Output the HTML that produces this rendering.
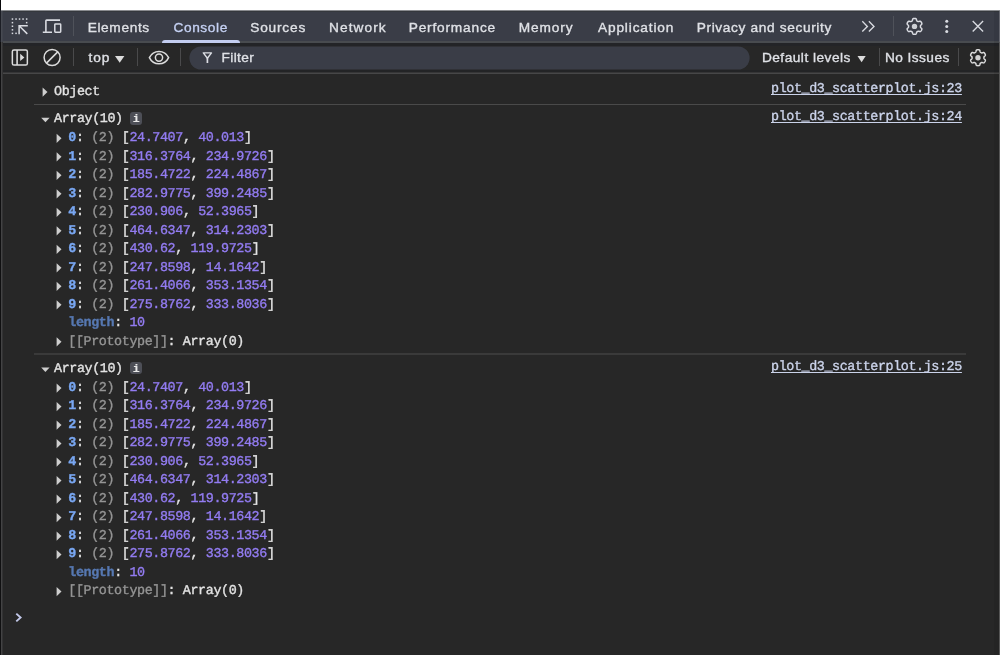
<!DOCTYPE html>
<html>
<head>
<meta charset="utf-8">
<title>DevTools Console</title>
<style>
html,body{margin:0;padding:0;}
body{width:1000px;height:655px;overflow:hidden;background:#272727;position:relative;font-family:"Liberation Sans",sans-serif;}
#root{position:absolute;left:0;top:0;width:1000px;height:655px;will-change:transform;}
.abs{position:absolute;}
#white{left:0;top:0;width:1000px;height:10px;background:#fff;}
#lb0{left:0;top:0;width:1px;height:10px;background:#08080a;}
#lb0b{left:0;top:10px;width:1px;height:32px;background:#1c1e25;}
#lb0c{left:0;top:42px;width:1px;height:613px;background:#101011;}
#lb1{left:1px;top:42px;width:1px;height:613px;background:#434344;}
#lb1t{left:1px;top:11px;width:1px;height:31px;background:#474a52;}
#lb2{left:2px;top:42px;width:1px;height:613px;background:#333334;}
#lb2t{left:2px;top:11px;width:1px;height:31px;background:#40434c;}
#rb{left:999px;top:42px;width:1px;height:613px;background:#565656;}
#rbt{left:999px;top:11px;width:1px;height:31px;background:#63656d;}
#rshade{left:994px;top:11px;width:5px;height:644px;background:rgba(0,0,0,0.07);}
#top10{left:0;top:10px;width:1000px;height:1px;background:#8a8c90;}
#top11{left:0;top:11px;width:1000px;height:1px;background:#35383d;}
#tabbar{left:0;top:10px;width:1000px;height:31px;background:#3a3d47;}
#tabline{left:0;top:41px;width:1000px;height:2px;background:#484b4f;}
#tabdark{left:0;top:43px;width:1000px;height:3px;background:#232427;}
#tooldark{left:0;top:70px;width:1000px;height:2px;background:#232426;}
#toolline0{left:0;top:72px;width:1000px;height:1px;background:#363637;}
#toolline{left:0;top:73px;width:1000px;height:1px;background:#474748;}
.t{position:absolute;white-space:nowrap;font-size:13.7px;line-height:16px;color:#dfe1e6;-webkit-text-stroke:0.35px currentColor;}
.vd{position:absolute;width:1px;background:#4f525a;}
.vd2{position:absolute;width:1px;background:#4a4a4b;}

.m{position:absolute;white-space:pre;font-family:"Liberation Mono",monospace;font-size:13.4px;letter-spacing:-0.4px;line-height:16px;color:#e3e3e3;text-rendering:geometricPrecision;-webkit-text-stroke:0.35px currentColor;}
.k{color:#79a7f2;font-weight:bold;}
.kd{color:#5678b2;font-weight:bold;}
.g{color:#959595;}
.n{color:#937cf2;}
.lnk{color:#cbd3ea;text-decoration:underline;text-decoration-thickness:1.2px;text-underline-offset:1.5px;text-decoration-skip-ink:none;}
.sep{position:absolute;left:34px;width:932px;height:1px;background:#4a4a4a;}
.ibadge{width:12.7px;height:12.7px;border-radius:3px;background:#4d4f57;}
.ibadge span{position:absolute;left:0;width:12.7px;top:-1.2px;text-align:center;font-family:"Liberation Mono",monospace;font-weight:bold;font-size:11.5px;line-height:16px;color:#e8e8e8;-webkit-text-stroke:0.15px currentColor;}
svg{position:absolute;overflow:visible;}
</style>
</head>
<body>
<div id="root">
<div class="abs" id="white"></div>
<div class="abs" id="tabbar"></div>
<div class="abs" id="tabline"></div>
<div class="abs" id="tabdark"></div>
<div class="abs" id="tooldark"></div>
<div class="abs" id="toolline0"></div>
<div class="abs" id="toolline"></div>
<div class="abs" id="top10"></div>
<div class="abs" id="top11"></div>
<div class="abs" id="rshade"></div>
<div class="abs" id="lb0"></div><div class="abs" id="lb0b"></div><div class="abs" id="lb0c"></div>
<div class="abs" id="lb1"></div><div class="abs" id="lb1t"></div>
<div class="abs" id="lb2"></div><div class="abs" id="lb2t"></div>
<div class="abs" id="rb"></div><div class="abs" id="rbt"></div>
<div class="abs" style="left:161.5px;top:40px;width:78px;height:3px;border-radius:3px 3px 0 0;background:#c3cdf0;"></div>
<div class="vd" style="left:73px;top:16px;height:20px"></div>
<div class="vd" style="left:893px;top:16px;height:20px"></div>
<div class="vd2" style="left:73px;top:48px;height:18px"></div>
<div class="vd2" style="left:137px;top:48px;height:18px"></div>
<div class="vd2" style="left:180px;top:48px;height:18px"></div>
<div class="vd2" style="left:879px;top:48px;height:18px"></div>
<div class="vd2" style="left:958px;top:48px;height:18px"></div>
<svg style="left:0;top:0" width="1" height="1"><rect x="189.4" y="46.4" width="560.2" height="23.2" rx="11.6" fill="#3a3d47"/></svg>
<div class="t" style="left:87.7px;top:19.65px;letter-spacing:0.63px;">Elements</div>
<div class="t" style="left:173.4px;top:19.65px;letter-spacing:0.62px;color:#c5d1f3;">Console</div>
<div class="t" style="left:250.2px;top:19.65px;letter-spacing:0.81px;">Sources</div>
<div class="t" style="left:329.0px;top:19.65px;letter-spacing:1.07px;">Network</div>
<div class="t" style="left:408.7px;top:19.65px;letter-spacing:0.81px;">Performance</div>
<div class="t" style="left:518.7px;top:19.65px;letter-spacing:0.9px;">Memory</div>
<div class="t" style="left:598.0px;top:19.65px;letter-spacing:0.84px;">Application</div>
<div class="t" style="left:696.7px;top:19.65px;letter-spacing:0.64px;">Privacy and security</div>
<div class="t" style="left:88.5px;top:49.75px;letter-spacing:0.9px;">top</div>
<div class="t" style="left:221.5px;top:49.75px;letter-spacing:0.38px;">Filter</div>
<div class="t" style="left:761.9px;top:49.75px;letter-spacing:0.49px;">Default levels</div>
<div class="t" style="left:885.0px;top:49.75px;letter-spacing:0.43px;">No Issues</div>

<!-- icons -->
<svg style="left:0;top:0" width="1000" height="80" viewBox="0 0 1000 80" fill="none">
<!-- inspect -->
<g fill="#d9dbe1">
<rect x="11.7" y="18.3" width="1.5" height="1.5"/><rect x="15.3" y="18.3" width="1.5" height="1.5"/><rect x="18.8" y="18.3" width="1.5" height="1.5"/><rect x="22.3" y="18.3" width="1.5" height="1.5"/><rect x="25.9" y="18.3" width="1.5" height="1.5"/>
<rect x="11.7" y="21.9" width="1.5" height="1.5"/><rect x="11.7" y="25.5" width="1.5" height="1.5"/><rect x="11.7" y="29.1" width="1.5" height="1.5"/><rect x="11.7" y="32.6" width="1.5" height="1.5"/>
<rect x="25.9" y="21.9" width="1.5" height="1.5"/>
<rect x="15.3" y="32.6" width="1.5" height="1.5"/>
</g>
<path d="M19.1 34.2V25.7H27.8M19.6 26.2L27.3 33.9" stroke="#d9dbe1" stroke-width="1.5"/>
<!-- device -->
<path d="M60 20.1H46.6Q45.9 20.1 45.9 20.8V31.6M42.8 32.2H52" stroke="#d9dbe1" stroke-width="1.6"/>
<rect x="54.8" y="24" width="5.9" height="8.2" rx="0.6" stroke="#d9dbe1" stroke-width="1.5"/>
<!-- >> -->
<path d="M862.3 21.3L867.4 26.4L862.3 31.5M868.9 21.3L874 26.4L868.9 31.5" stroke="#d9dbe1" stroke-width="1.35"/>
<!-- gear 1 -->
<g transform="translate(914.5,26.4)"><path d="M5.94 -0.00L5.94 -0.21L5.94 -0.42L5.96 -0.63L6.02 -0.85L6.16 -1.09L6.43 -1.37L6.82 -1.70L7.16 -2.05L7.34 -2.39L7.38 -2.69L7.33 -2.96L7.25 -3.23L7.14 -3.48L7.02 -3.73L6.88 -3.98L6.74 -4.21L6.59 -4.44L6.42 -4.66L6.23 -4.87L6.01 -5.05L5.74 -5.17L5.36 -5.18L4.88 -5.06L4.40 -4.89L4.02 -4.79L3.74 -4.79L3.52 -4.85L3.33 -4.94L3.15 -5.04L2.97 -5.14L2.79 -5.24L2.61 -5.35L2.44 -5.48L2.28 -5.64L2.14 -5.88L2.03 -6.25L1.94 -6.76L1.80 -7.23L1.61 -7.55L1.36 -7.73L1.10 -7.83L0.83 -7.89L0.55 -7.92L0.28 -7.94L0.00 -7.95L-0.28 -7.94L-0.55 -7.92L-0.83 -7.89L-1.10 -7.83L-1.36 -7.73L-1.61 -7.55L-1.80 -7.23L-1.94 -6.76L-2.03 -6.25L-2.14 -5.88L-2.28 -5.64L-2.44 -5.48L-2.61 -5.35L-2.79 -5.24L-2.97 -5.14L-3.15 -5.04L-3.33 -4.94L-3.52 -4.85L-3.74 -4.79L-4.02 -4.79L-4.40 -4.89L-4.88 -5.06L-5.36 -5.18L-5.74 -5.17L-6.01 -5.05L-6.23 -4.87L-6.42 -4.66L-6.59 -4.44L-6.74 -4.21L-6.88 -3.98L-7.02 -3.73L-7.14 -3.48L-7.25 -3.23L-7.33 -2.96L-7.38 -2.69L-7.34 -2.39L-7.16 -2.05L-6.82 -1.70L-6.43 -1.37L-6.16 -1.09L-6.02 -0.85L-5.96 -0.63L-5.94 -0.42L-5.94 -0.21L-5.94 -0.00L-5.94 0.21L-5.94 0.42L-5.96 0.63L-6.02 0.85L-6.16 1.09L-6.43 1.37L-6.82 1.70L-7.16 2.05L-7.34 2.39L-7.38 2.69L-7.33 2.96L-7.25 3.23L-7.14 3.48L-7.02 3.73L-6.88 3.98L-6.74 4.21L-6.59 4.44L-6.42 4.66L-6.23 4.87L-6.01 5.05L-5.74 5.17L-5.36 5.18L-4.88 5.06L-4.40 4.89L-4.02 4.79L-3.74 4.79L-3.52 4.85L-3.33 4.94L-3.15 5.04L-2.97 5.14L-2.79 5.24L-2.61 5.35L-2.44 5.48L-2.28 5.64L-2.14 5.88L-2.03 6.25L-1.94 6.76L-1.80 7.23L-1.61 7.55L-1.36 7.73L-1.10 7.83L-0.83 7.89L-0.55 7.92L-0.28 7.94L-0.00 7.95L0.28 7.94L0.55 7.92L0.83 7.89L1.10 7.83L1.36 7.73L1.61 7.55L1.80 7.23L1.94 6.76L2.03 6.25L2.14 5.88L2.28 5.64L2.44 5.48L2.61 5.35L2.79 5.24L2.97 5.14L3.15 5.04L3.33 4.94L3.52 4.85L3.74 4.79L4.02 4.79L4.40 4.89L4.88 5.06L5.36 5.18L5.74 5.17L6.01 5.05L6.23 4.87L6.42 4.66L6.59 4.44L6.74 4.21L6.88 3.98L7.02 3.73L7.14 3.48L7.25 3.23L7.33 2.96L7.38 2.69L7.34 2.39L7.16 2.05L6.82 1.70L6.43 1.37L6.16 1.09L6.02 0.85L5.96 0.63L5.94 0.42L5.94 0.21Z" stroke="#d9dbe1" stroke-width="1.5" stroke-linejoin="round" fill="none"/><circle r="2.7" fill="#cdcfd4"/></g>
<!-- dots -->
<g fill="#d9dbe1"><circle cx="946.75" cy="21.3" r="1.5"/><circle cx="946.75" cy="26.5" r="1.5"/><circle cx="946.75" cy="31.6" r="1.5"/></g>
<!-- close -->
<path d="M972.7 21.1L983.1 31.5M983.1 21.1L972.7 31.5" stroke="#d9dbe1" stroke-width="1.35"/>
<!-- sidebar -->
<rect x="12.35" y="50" width="15" height="15" rx="1.6" stroke="#dcdcdc" stroke-width="1.5"/>
<path d="M17.1 50V65" stroke="#dcdcdc" stroke-width="1.6"/>
<path d="M20.2 53.8L24.4 57.4L20.2 61Z" fill="#dcdcdc"/>
<!-- clear -->
<circle cx="52.1" cy="57.5" r="8" stroke="#dcdcdc" stroke-width="1.5"/>
<path d="M46.5 63.1L57.7 51.9" stroke="#dcdcdc" stroke-width="1.5"/>
<!-- top dropdown -->
<path d="M115 55.9H124.4L119.7 62.7Z" fill="#dcdcdc"/>
<!-- eye -->
<path d="M149.4 57.6C151.3 53.6 154.9 51.4 159 51.4C163.1 51.4 166.7 53.6 168.6 57.6C166.7 61.6 163.1 63.8 159 63.8C154.9 63.8 151.3 61.6 149.4 57.6Z" stroke="#dcdcdc" stroke-width="1.5"/>
<circle cx="159" cy="57.6" r="3.6" stroke="#dcdcdc" stroke-width="1.5"/>
<!-- funnel -->
<path d="M203.3 52.9H211.5L207.4 58.2Z" stroke="#dcdee4" stroke-width="1.4" stroke-linejoin="round"/>
<path d="M207.4 57.8V63" stroke="#dcdee4" stroke-width="1.7"/>
<!-- levels dropdown -->
<path d="M857.5 55.9H865.7L861.6 62.2Z" fill="#dcdcdc"/>
<!-- gear 2 -->
<g transform="translate(978,57.7)"><path d="M5.94 -0.00L5.94 -0.21L5.94 -0.42L5.96 -0.63L6.02 -0.85L6.16 -1.09L6.43 -1.37L6.82 -1.70L7.16 -2.05L7.34 -2.39L7.38 -2.69L7.33 -2.96L7.25 -3.23L7.14 -3.48L7.02 -3.73L6.88 -3.98L6.74 -4.21L6.59 -4.44L6.42 -4.66L6.23 -4.87L6.01 -5.05L5.74 -5.17L5.36 -5.18L4.88 -5.06L4.40 -4.89L4.02 -4.79L3.74 -4.79L3.52 -4.85L3.33 -4.94L3.15 -5.04L2.97 -5.14L2.79 -5.24L2.61 -5.35L2.44 -5.48L2.28 -5.64L2.14 -5.88L2.03 -6.25L1.94 -6.76L1.80 -7.23L1.61 -7.55L1.36 -7.73L1.10 -7.83L0.83 -7.89L0.55 -7.92L0.28 -7.94L0.00 -7.95L-0.28 -7.94L-0.55 -7.92L-0.83 -7.89L-1.10 -7.83L-1.36 -7.73L-1.61 -7.55L-1.80 -7.23L-1.94 -6.76L-2.03 -6.25L-2.14 -5.88L-2.28 -5.64L-2.44 -5.48L-2.61 -5.35L-2.79 -5.24L-2.97 -5.14L-3.15 -5.04L-3.33 -4.94L-3.52 -4.85L-3.74 -4.79L-4.02 -4.79L-4.40 -4.89L-4.88 -5.06L-5.36 -5.18L-5.74 -5.17L-6.01 -5.05L-6.23 -4.87L-6.42 -4.66L-6.59 -4.44L-6.74 -4.21L-6.88 -3.98L-7.02 -3.73L-7.14 -3.48L-7.25 -3.23L-7.33 -2.96L-7.38 -2.69L-7.34 -2.39L-7.16 -2.05L-6.82 -1.70L-6.43 -1.37L-6.16 -1.09L-6.02 -0.85L-5.96 -0.63L-5.94 -0.42L-5.94 -0.21L-5.94 -0.00L-5.94 0.21L-5.94 0.42L-5.96 0.63L-6.02 0.85L-6.16 1.09L-6.43 1.37L-6.82 1.70L-7.16 2.05L-7.34 2.39L-7.38 2.69L-7.33 2.96L-7.25 3.23L-7.14 3.48L-7.02 3.73L-6.88 3.98L-6.74 4.21L-6.59 4.44L-6.42 4.66L-6.23 4.87L-6.01 5.05L-5.74 5.17L-5.36 5.18L-4.88 5.06L-4.40 4.89L-4.02 4.79L-3.74 4.79L-3.52 4.85L-3.33 4.94L-3.15 5.04L-2.97 5.14L-2.79 5.24L-2.61 5.35L-2.44 5.48L-2.28 5.64L-2.14 5.88L-2.03 6.25L-1.94 6.76L-1.80 7.23L-1.61 7.55L-1.36 7.73L-1.10 7.83L-0.83 7.89L-0.55 7.92L-0.28 7.94L-0.00 7.95L0.28 7.94L0.55 7.92L0.83 7.89L1.10 7.83L1.36 7.73L1.61 7.55L1.80 7.23L1.94 6.76L2.03 6.25L2.14 5.88L2.28 5.64L2.44 5.48L2.61 5.35L2.79 5.24L2.97 5.14L3.15 5.04L3.33 4.94L3.52 4.85L3.74 4.79L4.02 4.79L4.40 4.89L4.88 5.06L5.36 5.18L5.74 5.17L6.01 5.05L6.23 4.87L6.42 4.66L6.59 4.44L6.74 4.21L6.88 3.98L7.02 3.73L7.14 3.48L7.25 3.23L7.33 2.96L7.38 2.69L7.34 2.39L7.16 2.05L6.82 1.70L6.43 1.37L6.16 1.09L6.02 0.85L5.96 0.63L5.94 0.42L5.94 0.21Z" stroke="#dcdcdc" stroke-width="1.5" stroke-linejoin="round" fill="none"/><circle r="2.7" fill="#d0d0d0"/></g>
</svg>
<!-- prompt -->
<svg style="left:0;top:0" width="1" height="1"><path d="M16.3 613.6L20.6 617.5L16.3 621.4" stroke="#c3c9ea" stroke-width="1.9" fill="none"/></svg>

<svg style="left:0;top:0" width="1" height="1"><polygon points="42.60,87.50 47.50,92.10 42.60,96.70" fill="#cecece"/></svg>

<div class="m " style="left:54px;top:85px;">Object</div>

<div class="m lnk" style="left:771px;top:82px;">plot_d3_scatterplot.js:23</div>

<div class="sep" style="top:104px"></div>
<svg style="left:0;top:0" width="1" height="1"><polygon points="41.20,117.70 49.60,117.70 45.40,122.30" fill="#cecece"/></svg>
<div class="m " style="left:54px;top:112px;">Array(10)</div>
<div class="abs ibadge" style="left:129.8px;top:112.00px;"><span>i</span></div>
<div class="m lnk" style="left:771px;top:110px;">plot_d3_scatterplot.js:24</div>
<svg style="left:0;top:0" width="1" height="1"><polygon points="56.60,133.70 61.50,138.30 56.60,142.90" fill="#cecece"/></svg>
<div class="m " style="left:68.3px;top:131px;"><span class="k">0</span>: <span class="g">(2)</span> [<span class="n">24.7407</span>, <span class="n">40.013</span>]</div>
<svg style="left:0;top:0" width="1" height="1"><polygon points="56.60,152.20 61.50,156.80 56.60,161.40" fill="#cecece"/></svg>
<div class="m " style="left:68.3px;top:150px;"><span class="k">1</span>: <span class="g">(2)</span> [<span class="n">316.3764</span>, <span class="n">234.9726</span>]</div>
<svg style="left:0;top:0" width="1" height="1"><polygon points="56.60,170.70 61.50,175.30 56.60,179.90" fill="#cecece"/></svg>
<div class="m " style="left:68.3px;top:168px;"><span class="k">2</span>: <span class="g">(2)</span> [<span class="n">185.4722</span>, <span class="n">224.4867</span>]</div>
<svg style="left:0;top:0" width="1" height="1"><polygon points="56.60,189.20 61.50,193.80 56.60,198.40" fill="#cecece"/></svg>
<div class="m " style="left:68.3px;top:187px;"><span class="k">3</span>: <span class="g">(2)</span> [<span class="n">282.9775</span>, <span class="n">399.2485</span>]</div>
<svg style="left:0;top:0" width="1" height="1"><polygon points="56.60,207.70 61.50,212.30 56.60,216.90" fill="#cecece"/></svg>
<div class="m " style="left:68.3px;top:205px;"><span class="k">4</span>: <span class="g">(2)</span> [<span class="n">230.906</span>, <span class="n">52.3965</span>]</div>
<svg style="left:0;top:0" width="1" height="1"><polygon points="56.60,226.20 61.50,230.80 56.60,235.40" fill="#cecece"/></svg>
<div class="m " style="left:68.3px;top:224px;"><span class="k">5</span>: <span class="g">(2)</span> [<span class="n">464.6347</span>, <span class="n">314.2303</span>]</div>
<svg style="left:0;top:0" width="1" height="1"><polygon points="56.60,244.70 61.50,249.30 56.60,253.90" fill="#cecece"/></svg>
<div class="m " style="left:68.3px;top:242px;"><span class="k">6</span>: <span class="g">(2)</span> [<span class="n">430.62</span>, <span class="n">119.9725</span>]</div>
<svg style="left:0;top:0" width="1" height="1"><polygon points="56.60,263.20 61.50,267.80 56.60,272.40" fill="#cecece"/></svg>
<div class="m " style="left:68.3px;top:261px;"><span class="k">7</span>: <span class="g">(2)</span> [<span class="n">247.8598</span>, <span class="n">14.1642</span>]</div>
<svg style="left:0;top:0" width="1" height="1"><polygon points="56.60,281.70 61.50,286.30 56.60,290.90" fill="#cecece"/></svg>
<div class="m " style="left:68.3px;top:279px;"><span class="k">8</span>: <span class="g">(2)</span> [<span class="n">261.4066</span>, <span class="n">353.1354</span>]</div>
<svg style="left:0;top:0" width="1" height="1"><polygon points="56.60,300.20 61.50,304.80 56.60,309.40" fill="#cecece"/></svg>
<div class="m " style="left:68.3px;top:298px;"><span class="k">9</span>: <span class="g">(2)</span> [<span class="n">275.8762</span>, <span class="n">333.8036</span>]</div>
<div class="m " style="left:68.3px;top:316px;"><span class="kd">length</span>: <span class="n">10</span></div>
<svg style="left:0;top:0" width="1" height="1"><polygon points="56.60,337.20 61.50,341.80 56.60,346.40" fill="#cecece"/></svg>
<div class="m " style="left:68.3px;top:335px;"><span class="g">[[Prototype]]</span>: Array(0)</div>

<div class="sep" style="top:353px;height:2px;background:#3a3a3a"></div>
<svg style="left:0;top:0" width="1" height="1"><polygon points="41.20,367.45 49.60,367.45 45.40,372.05" fill="#cecece"/></svg>
<div class="m " style="left:54px;top:362px;">Array(10)</div>
<div class="abs ibadge" style="left:129.8px;top:361.75px;"><span>i</span></div>
<div class="m lnk" style="left:771px;top:360px;">plot_d3_scatterplot.js:25</div>
<svg style="left:0;top:0" width="1" height="1"><polygon points="56.60,383.45 61.50,388.05 56.60,392.65" fill="#cecece"/></svg>
<div class="m " style="left:68.3px;top:381px;"><span class="k">0</span>: <span class="g">(2)</span> [<span class="n">24.7407</span>, <span class="n">40.013</span>]</div>
<svg style="left:0;top:0" width="1" height="1"><polygon points="56.60,401.95 61.50,406.55 56.60,411.15" fill="#cecece"/></svg>
<div class="m " style="left:68.3px;top:399px;"><span class="k">1</span>: <span class="g">(2)</span> [<span class="n">316.3764</span>, <span class="n">234.9726</span>]</div>
<svg style="left:0;top:0" width="1" height="1"><polygon points="56.60,420.45 61.50,425.05 56.60,429.65" fill="#cecece"/></svg>
<div class="m " style="left:68.3px;top:418px;"><span class="k">2</span>: <span class="g">(2)</span> [<span class="n">185.4722</span>, <span class="n">224.4867</span>]</div>
<svg style="left:0;top:0" width="1" height="1"><polygon points="56.60,438.95 61.50,443.55 56.60,448.15" fill="#cecece"/></svg>
<div class="m " style="left:68.3px;top:436px;"><span class="k">3</span>: <span class="g">(2)</span> [<span class="n">282.9775</span>, <span class="n">399.2485</span>]</div>
<svg style="left:0;top:0" width="1" height="1"><polygon points="56.60,457.45 61.50,462.05 56.60,466.65" fill="#cecece"/></svg>
<div class="m " style="left:68.3px;top:455px;"><span class="k">4</span>: <span class="g">(2)</span> [<span class="n">230.906</span>, <span class="n">52.3965</span>]</div>
<svg style="left:0;top:0" width="1" height="1"><polygon points="56.60,475.95 61.50,480.55 56.60,485.15" fill="#cecece"/></svg>
<div class="m " style="left:68.3px;top:473px;"><span class="k">5</span>: <span class="g">(2)</span> [<span class="n">464.6347</span>, <span class="n">314.2303</span>]</div>
<svg style="left:0;top:0" width="1" height="1"><polygon points="56.60,494.45 61.50,499.05 56.60,503.65" fill="#cecece"/></svg>
<div class="m " style="left:68.3px;top:492px;"><span class="k">6</span>: <span class="g">(2)</span> [<span class="n">430.62</span>, <span class="n">119.9725</span>]</div>
<svg style="left:0;top:0" width="1" height="1"><polygon points="56.60,512.95 61.50,517.55 56.60,522.15" fill="#cecece"/></svg>
<div class="m " style="left:68.3px;top:510px;"><span class="k">7</span>: <span class="g">(2)</span> [<span class="n">247.8598</span>, <span class="n">14.1642</span>]</div>
<svg style="left:0;top:0" width="1" height="1"><polygon points="56.60,531.45 61.50,536.05 56.60,540.65" fill="#cecece"/></svg>
<div class="m " style="left:68.3px;top:529px;"><span class="k">8</span>: <span class="g">(2)</span> [<span class="n">261.4066</span>, <span class="n">353.1354</span>]</div>
<svg style="left:0;top:0" width="1" height="1"><polygon points="56.60,549.95 61.50,554.55 56.60,559.15" fill="#cecece"/></svg>
<div class="m " style="left:68.3px;top:547px;"><span class="k">9</span>: <span class="g">(2)</span> [<span class="n">275.8762</span>, <span class="n">333.8036</span>]</div>
<div class="m " style="left:68.3px;top:566px;"><span class="kd">length</span>: <span class="n">10</span></div>
<svg style="left:0;top:0" width="1" height="1"><polygon points="56.60,586.95 61.50,591.55 56.60,596.15" fill="#cecece"/></svg>
<div class="m " style="left:68.3px;top:584px;"><span class="g">[[Prototype]]</span>: Array(0)</div>

</div>
</body>
</html>
